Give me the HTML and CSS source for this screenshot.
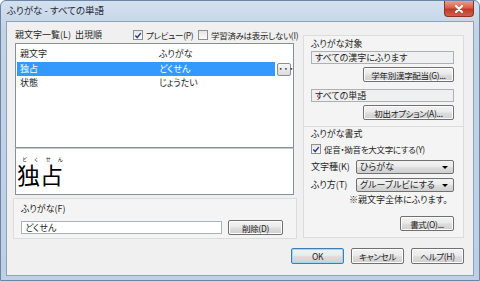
FILE: index.html
```html
<!DOCTYPE html>
<html lang="ja">
<head>
    <meta charset="UTF-8">
    <title>ふりがな - すべての単語</title>
    <link rel="stylesheet" href="styles.css">
</head>
<body>
    <div class="window">
        <div class="titlebar">
            <span class="title">ふりがな - すべての単語</span>
            <span class="close">
                <svg width="10" height="8" viewBox="0 0 10 8"><path d="M2 1 L8 7 M8 1 L2 7" stroke="#fff" stroke-width="2" stroke-linecap="round"/></svg>
            </span>
        </div>

        <div class="client">
            <div class="columns">
                <!-- left: word list and preview -->
                <div class="left">
                    <div class="toolbar">
                        <span class="list-label">親文字一覧(L)&nbsp;&nbsp;出現順</span>
                        <label class="check-item preview-check"><span class="check on"><svg width="9" height="9" viewBox="0 0 9 9"><path d="M1.5 4.5 L3.6 6.8 L7.6 1.8" fill="none" stroke="#2a3b8f" stroke-width="1.6"/></svg></span>プレビュー(P)</label>
                        <label class="check-item"><span class="check"></span>学習済みは表示しない(I)</label>
                    </div>

                    <div class="listbox">
                        <div class="row head"><span class="c1">親文字</span><span class="c2">ふりがな</span></div>
                        <div class="row-wrap">
                            <div class="row selected"><span class="c1">独占</span><span class="c2">どくせん</span></div>
                            <span class="dots">···</span>
                        </div>
                        <div class="row"><span class="c1">状態</span><span class="c2">じょうたい</span></div>
                    </div>

                    <div class="preview">
                        <div class="kana">どくせん</div>
                        <div class="kanji">独占</div>
                    </div>

                    <div class="group reading">
                        <div class="field-label">ふりがな(F)</div>
                        <div class="reading-row">
                            <div class="textbox white">どくせん</div>
                            <div class="btn del">削除(D)</div>
                        </div>
                    </div>
                </div>

                <!-- right: target and format settings -->
                <div class="right">
                    <div class="group target">
                        <div class="group-title">ふりがな対象</div>
                        <div class="textbox">すべての漢字にふります</div>
                        <div class="btn side">学年別漢字配当(G)...</div>
                        <div class="textbox second">すべての単語</div>
                        <div class="btn side tight">初出オプション(A)...</div>
                    </div>

                    <div class="group format">
                        <div class="group-title">ふりがな書式</div>
                        <label class="check-item caps"><span class="check on"><svg width="9" height="9" viewBox="0 0 9 9"><path d="M1.5 4.5 L3.6 6.8 L7.6 1.8" fill="none" stroke="#2a3b8f" stroke-width="1.6"/></svg></span>促音・拗音を大文字にする(Y)</label>
                        <div class="select-row">
                            <span class="select-label">文字種(K)</span>
                            <div class="select">ひらがな<i class="arrow"></i></div>
                        </div>
                        <div class="select-row">
                            <span class="select-label">ふり方(T)</span>
                            <div class="select">グループルビにする<i class="arrow"></i></div>
                        </div>
                        <div class="note">※親文字全体にふります。</div>
                        <div class="btn style-btn">書式(O)...</div>
                    </div>
                </div>
            </div>

            <div class="footer">
                <div class="btn foot default">OK</div>
                <div class="btn foot">キャンセル</div>
                <div class="btn foot">ヘルプ(H)</div>
            </div>
        </div>
    </div>
</body>
</html>
```

FILE: styles.css
```css
* {
    box-sizing: border-box;
}
body {
    margin: 0;
    font-family: "Noto Sans CJK JP", "Noto Sans", sans-serif;
    font-size: 9px;
    font-feature-settings: "palt";
    color: #1e1e1e;
    background: #fff;
    white-space: nowrap;
}
.window {
    width: 480px;
    height: 281px;
    display: flex;
    flex-direction: column;
    background: linear-gradient(#d3e0ee, #c3d3e6 30px, #bfd0e4);
    border: 1px solid #6d85a4;
    border-radius: 6px 6px 0 0;
}
.titlebar {
    height: 20px;
    display: flex;
    align-items: flex-start;
    justify-content: space-between;
    padding-left: 6px;
}
.title {
    font-size: 9.5px;
    line-height: 19px;
    color: #1f2a38;
}
.close {
    width: 30px;
    height: 16px;
    margin-right: 5px;
    display: flex;
    align-items: center;
    justify-content: center;
    border: 1px solid #8c3126;
    border-top: none;
    border-radius: 0 0 4px 4px;
    background: linear-gradient(#e5a193, #d4604d 45%, #c23a27 55%, #d0604a);
}
.client {
    flex: 1;
    margin: 0 5px 4px 5px;
    display: flex;
    flex-direction: column;
    background: #f0f0f0;
    border: 1px solid #8ea2bd;
    padding: 5px 9px 0 6px;
}
.columns {
    display: flex;
    gap: 6px;
}
.left {
    width: 284px;
    flex: none;
    display: flex;
    flex-direction: column;
}
.toolbar {
    height: 16px;
    display: flex;
    align-items: center;
    padding-left: 2px;
    line-height: 12px;
}
.toolbar > * {
    flex: none;
}
.list-label {
    width: 118px;
}
.check-item {
    display: flex;
    align-items: center;
    line-height: 12px;
    font-size: 8.5px;
    letter-spacing: -0.3px;
}
.preview-check {
    width: 65px;
}
.check {
    width: 10px;
    height: 10px;
    margin-right: 3px;
    border: 1px solid #8e8f8f;
    background: linear-gradient(#e6e6e6, #fbfbfb);
    display: flex;
    align-items: center;
    justify-content: center;
}
.listbox {
    margin-left: 2px;
    width: 279px;
    height: 105px;
    background: #fff;
    border: 1px solid #8a8f97;
    padding: 1px 1px 0 1px;
}
.row {
    display: flex;
    height: 14px;
    line-height: 14px;
    padding-left: 3px;
}
.row.head {
    height: 17px;
    line-height: 17px;
}
.c1 {
    width: 139px;
}
.row-wrap {
    display: flex;
    align-items: center;
    gap: 2px;
}
.row.selected {
    width: 258px;
    background: #3399ff;
    color: #fff;
}
.dots {
    width: 14px;
    height: 13px;
    border: 1px solid #8c8c8c;
    border-radius: 2px;
    background: linear-gradient(#f6f6f6, #dcdcdc);
    font-size: 9px;
    line-height: 9px;
    font-weight: bold;
    text-align: center;
    color: #333;
}
.preview {
    margin-left: 2px;
    width: 279px;
    height: 47px;
    background: #fff;
    border: 1px solid #8a8f97;
    border-top: 1px solid #c8c8c8;
    padding: 7px 0 0 1px;
    color: #000;
    font-feature-settings: normal;
}
.kana {
    font-size: 5px;
    line-height: 5px;
    letter-spacing: 7px;
    padding-left: 5px;
}
.kanji {
    font-size: 23px;
    line-height: 26px;
}
.group {
    background: #f4f4f4;
    border: 1px solid #dcdcdc;
}
.reading {
    margin-top: 3px;
    height: 41px;
    padding: 3px 0 0 7px;
}
.field-label {
    line-height: 13px;
}
.reading-row {
    display: flex;
    align-items: center;
    gap: 6px;
    margin-top: 5px;
}
.textbox {
    height: 13px;
    line-height: 11px;
    padding-left: 3px;
    border: 1px solid #acb0b8;
    background: #f0f0f0;
}
.textbox.white {
    width: 201px;
    background: #fff;
}
.btn {
    height: 15px;
    display: flex;
    align-items: center;
    justify-content: center;
    border: 1px solid #707070;
    border-radius: 2px;
    background: linear-gradient(#f2f2f2, #ebebeb 45%, #dddddd 55%, #cfcfcf);
    box-shadow: inset 0 0 0 1px #fcfcfc;
    line-height: 12px;
    font-size: 8.5px;
    letter-spacing: -0.3px;
}
.btn.del {
    width: 55px;
}
.right {
    width: 163px;
    padding-top: 8px;
    display: flex;
    flex-direction: column;
}
.target {
    height: 92px;
    padding: 2px 9px 0 7px;
}
.group-title {
    line-height: 12px;
    padding-bottom: 1px;
}
.side {
    width: 91px;
    margin: 3px 0 0 auto;
}
.textbox.second {
    margin-top: 7px;
}
.side.tight {
    margin-top: 3px;
}
.format {
    margin-top: -1px;
    height: 112px;
    padding: 1px 9px 0 7px;
}
.caps {
    margin-top: 1px;
    height: 14px;
}
.select-row {
    display: flex;
    align-items: center;
    margin-top: 4px;
}
.select-label {
    width: 45px;
    line-height: 12px;
}
.select {
    width: 98px;
    height: 14px;
    display: flex;
    align-items: center;
    justify-content: space-between;
    padding: 0 5px 0 3px;
    border: 1px solid #707070;
    border-radius: 2px;
    background: linear-gradient(#f2f2f2, #ebebeb 45%, #dddddd 55%, #cfcfcf);
    line-height: 12px;
}
.arrow {
    width: 0;
    height: 0;
    border-left: 3px solid transparent;
    border-right: 3px solid transparent;
    border-top: 3px solid #000;
}
.note {
    margin: 2px 0 0 38px;
    line-height: 12px;
}
.style-btn {
    width: 54px;
    margin: 10px 0 0 auto;
}
.footer {
    margin-top: 9px;
    display: flex;
    justify-content: flex-end;
    gap: 7px;
}
.btn.foot {
    width: 53px;
    height: 16px;
}
.btn.default {
    border-color: #3c7fb1;
    box-shadow: inset 0 0 0 1px #9fd8f5;
}
```
